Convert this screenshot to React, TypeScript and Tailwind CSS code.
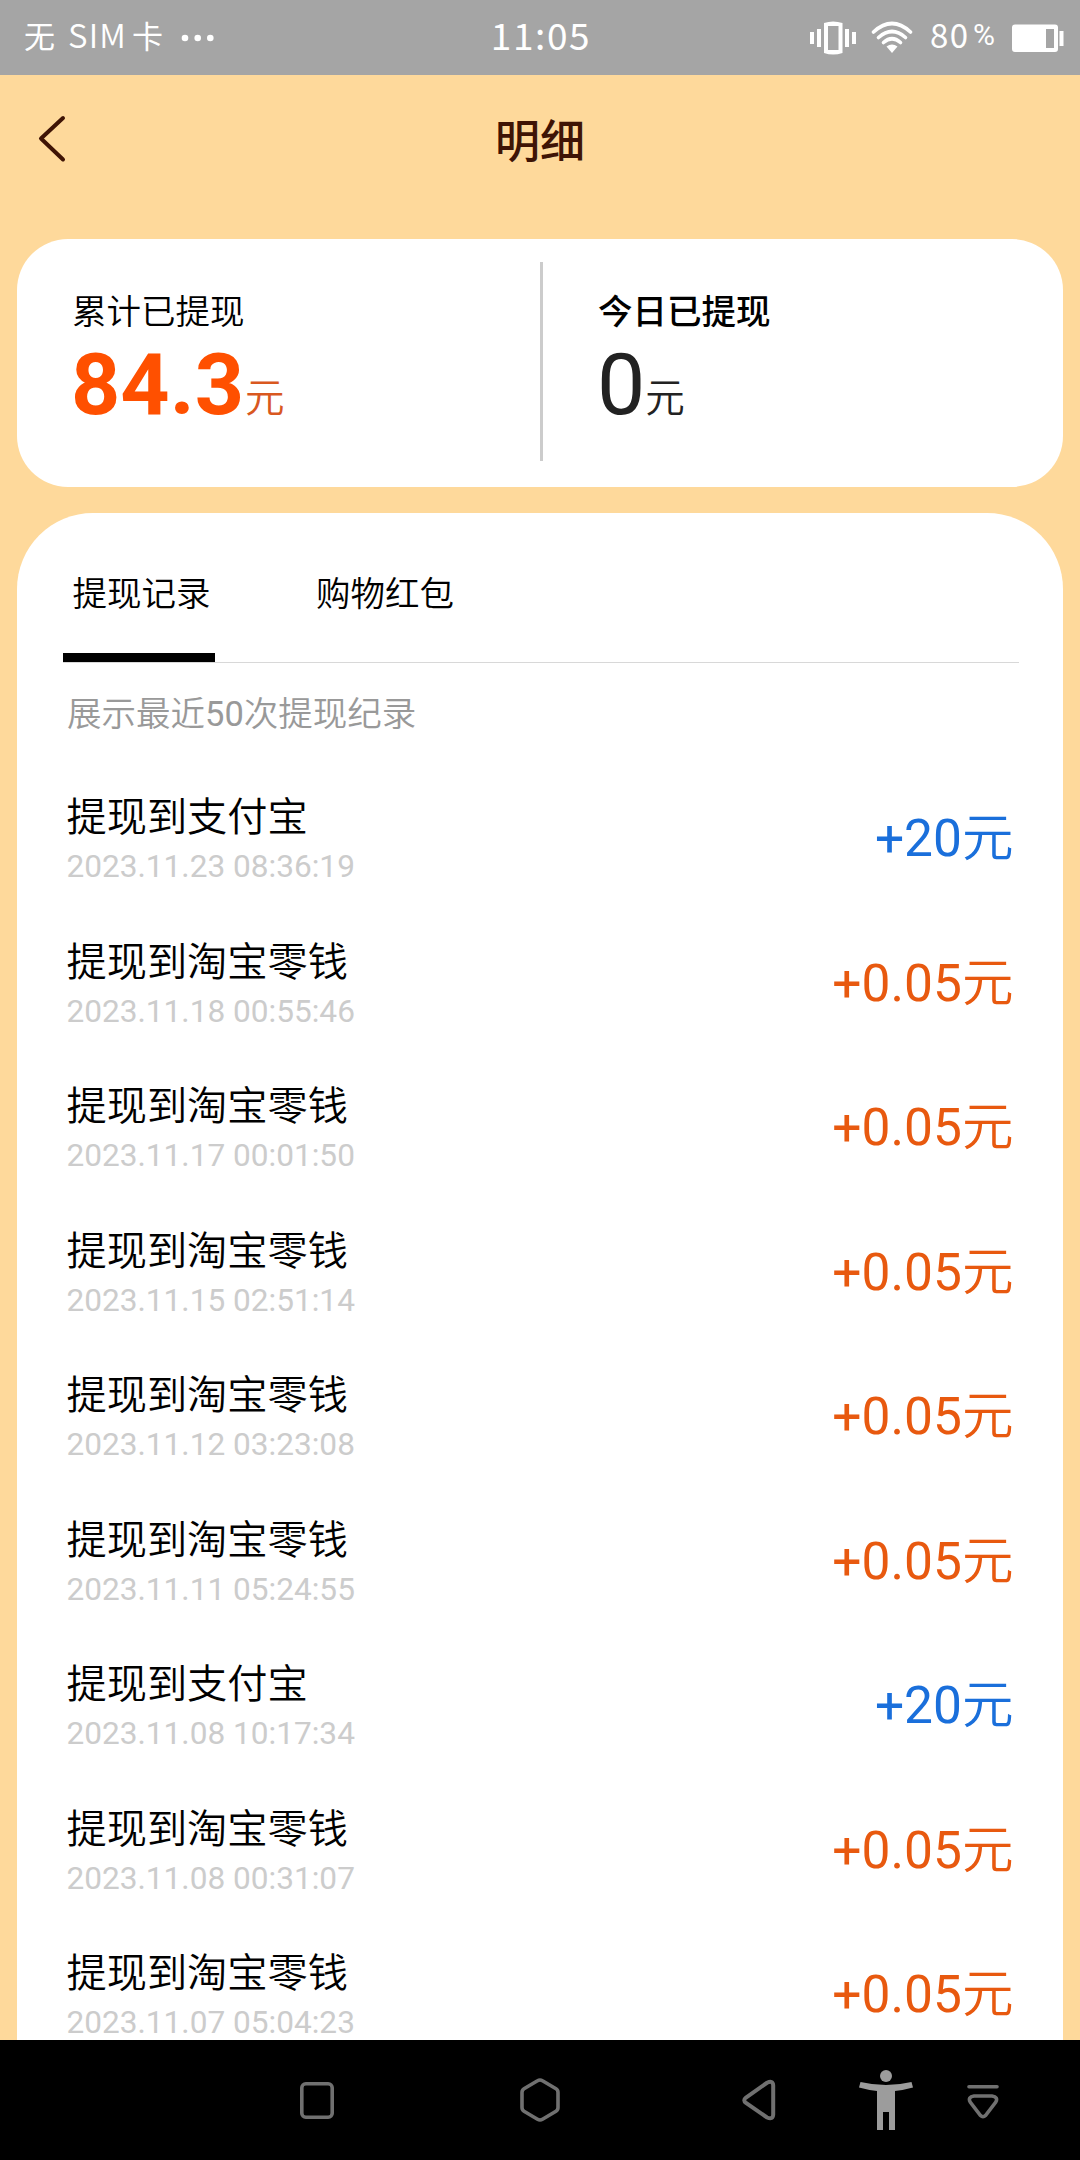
const records = [
  { id: 1, title: "提现到支付宝", time: "2023.11.23 08:36:19", amount: "+20", blue: true },
  { id: 2, title: "提现到淘宝零钱", time: "2023.11.18 00:55:46", amount: "+0.05", blue: false },
  { id: 3, title: "提现到淘宝零钱", time: "2023.11.17 00:01:50", amount: "+0.05", blue: false },
  { id: 4, title: "提现到淘宝零钱", time: "2023.11.15 02:51:14", amount: "+0.05", blue: false },
  { id: 5, title: "提现到淘宝零钱", time: "2023.11.12 03:23:08", amount: "+0.05", blue: false },
  { id: 6, title: "提现到淘宝零钱", time: "2023.11.11 05:24:55", amount: "+0.05", blue: false },
  { id: 7, title: "提现到支付宝", time: "2023.11.08 10:17:34", amount: "+20", blue: true },
  { id: 8, title: "提现到淘宝零钱", time: "2023.11.08 00:31:07", amount: "+0.05", blue: false },
  { id: 9, title: "提现到淘宝零钱", time: "2023.11.07 05:04:23", amount: "+0.05", blue: false },
];

function StatusBar() {
  return (
    <div className="grid h-[75px] shrink-0 grid-cols-3 items-center bg-[#a5a5a5] font-['Noto_Sans_CJK_SC',sans-serif] text-white">
      <div className="flex items-center pb-[6px] pl-6 text-[31px] leading-none">
        <span className="w-[44px]">无</span>
        <span className="w-[64px] text-[33px] font-[350] tracking-[1.2px]">SIM</span>
        <span>卡</span>
        <svg className="mt-[7px] ml-[18px]" width="34" height="8" viewBox="0 0 34 8" fill="white">
          <circle cx="4" cy="4" r="3.3" />
          <circle cx="16.7" cy="4" r="3.3" />
          <circle cx="29.3" cy="4" r="3.3" />
        </svg>
      </div>
      <div className="pb-[7px] pl-[2px] text-center text-[37px] leading-none tracking-[1.6px]">11:05</div>
      <div className="flex items-center justify-end pr-4">
        <svg width="47" height="34" viewBox="0 0 47 34" fill="white">
          <rect x="0" y="11" width="4" height="12" />
          <rect x="7" y="8" width="4" height="18" />
          <path fillRule="evenodd" d="M14 2 Q23 -1 32.500 2 V32 Q23 35 14 32 Z M18 5 V29 H28.500 V5 Z" />
          <rect x="35" y="8" width="4" height="18" />
          <rect x="42" y="11" width="4" height="12" />
        </svg>
        <svg className="ml-[14px]" width="42" height="34" viewBox="0 0 42 34" fill="none" stroke="white" strokeWidth="3.600" strokeLinecap="round">
          <path d="M2.500 11 Q21 -6 39.500 11" />
          <path d="M7.500 16.500 Q21 4.500 34.500 16.500" />
          <path d="M12.500 21.500 Q21 14 29.500 21.500" />
          <path d="M15.500 25.500 Q21 21.500 26.500 25.500 L21 32 Z" fill="white" stroke="none" />
        </svg>
        <span className="ml-[17px] w-[43px] pb-[7px] text-[33px] leading-none tracking-[1.500px]">80</span>
        <span className="w-[21px] pb-[5px] font-['Roboto',sans-serif] text-[30px] leading-none">%</span>
        <svg className="ml-[18px]" width="52" height="28" viewBox="0 0 52 28" fill="white">
          <path fillRule="evenodd" d="M3 0.500 H43 Q46 0.500 46 3.500 V25 Q46 28 43 28 H3 Q0 28 0 25 V3.500 Q0 0.500 3 0.500 Z M34 5 V24 H42 V5 Z" />
          <rect x="47.500" y="7" width="4" height="15" />
        </svg>
      </div>
    </div>
  );
}

function Header() {
  return (
    <div className="grid h-[164px] shrink-0 grid-cols-3">
      <svg className="mt-[38px] ml-[36px]" width="32" height="50" viewBox="0 0 32 50" fill="none" stroke="#3f1405" strokeWidth="4" strokeLinecap="round" strokeLinejoin="round">
        <path d="M27 5 L5 25.500 L27 46.500" />
      </svg>
      <h1 className="mt-[36px] text-center text-[45px] leading-[64px] font-medium text-[#3f1405]">明细</h1>
    </div>
  );
}

function NavBar() {
  return (
    <div className="flex h-[120px] shrink-0 bg-black pt-[30px]">
      <svg className="ml-[300px]" width="34" height="60" viewBox="0 0 34 60" fill="none" stroke="#707070" strokeWidth="3.600">
        <rect x="1.800" y="13.800" width="30.400" height="33.400" rx="4" />
      </svg>
      <svg className="ml-[186px]" width="40" height="60" viewBox="0 0 40 60" fill="none" stroke="#707070" strokeWidth="3.600" strokeLinejoin="round">
        <path d="M17.500 10.800 Q20 9.200 22.500 10.800 L36 18.800 Q38 20 38 22.500 V37.500 Q38 40 36 41.200 L22.500 49.200 Q20 50.800 17.500 49.200 L4 41.200 Q2 40 2 37.500 V22.500 Q2 20 4 18.800 Z" />
      </svg>
      <svg className="ml-[182px]" width="34" height="60" viewBox="0 0 34 60" fill="none" stroke="#707070" strokeWidth="4">
        <path d="M25 12.800 Q31 10 31.200 15.500 V44.500 Q31 50 25 47.500 L4 33 Q0.500 30.200 4 27.500 Z" />
      </svg>
      <svg className="ml-[82px]" width="56" height="62" viewBox="0 0 56 62" fill="#9c9c9c">
        <circle cx="28" cy="6" r="6" />
        <path d="M2.500 12 Q28 18 53.500 12 L55 17.500 Q46 20 37 21 V60 H31 V42 H25 V60 H19 V21 Q10 20 1 17.500 Z" />
      </svg>
      <svg className="ml-[53px]" width="32" height="60" viewBox="0 0 32 60" fill="none" stroke="#707070" strokeWidth="3.600" strokeLinecap="round">
        <path d="M2 16.800 H30" />
        <path d="M7 26 H25 Q31.500 27 28.800 32 L18.500 45.500 Q16 48 13.500 45.500 L3.200 32 Q0.500 27 7 26 Z" />
      </svg>
    </div>
  );
}

export default function App() {
  return (
    <div className="flex h-[2160px] w-[1080px] flex-col overflow-hidden bg-[#fed99b] font-['Roboto','Noto_Sans_CJK_SC',sans-serif]">
      <StatusBar />
      <Header />
      <section className="mx-[17px] flex h-[248px] shrink-0 rounded-[51px] bg-white">
        <div className="w-[523px] pt-[49px] pl-[55px]">
          <div className="text-[34.5px] leading-[48px] font-[350] text-black">累计已提现</div>
          <div className="-ml-px flex items-baseline leading-[98px]">
            <span className="text-[86px] font-bold text-[#ff5000]">84.3</span>
            <span className="relative -top-[2px] ml-px text-[39.5px] leading-[40px] font-[350] text-[#d9581f]">元</span>
          </div>
        </div>
        <div className="mt-[23px] h-[199px] w-[3px] bg-[#cccccc]" />
        <div className="flex-1 pt-[49px] pl-[55px]">
          <div className="text-[34.5px] leading-[48px] font-medium text-black">今日已提现</div>
          <div className="-ml-px flex items-baseline leading-[98px] text-[#222222]">
            <span className="text-[86px]">0</span>
            <span className="relative -top-[2px] text-[39.5px] leading-[40px] font-[350]">元</span>
          </div>
        </div>
      </section>
      <section className="mx-[17px] mt-[26px] flex min-h-0 flex-1 flex-col overflow-hidden rounded-t-[76px] bg-white px-[46px]">
        <div className="flex h-[150px] w-[956px] shrink-0 items-stretch border-b border-[#d8d8d8] text-[34.5px] leading-[50px] font-[350] text-black">
          <div className="w-[152px] border-b-[9px] border-black pt-[56px] pl-[9.5px]">提现记录</div>
          <div className="ml-[101px] pt-[56px]">购物红包</div>
        </div>
        <p className="mt-[26px] h-[50px] shrink-0 pl-[4px] text-[34.5px] leading-[50px] font-[350] text-[#999999]">
          展示最近<span className="font-normal">50</span>次提现纪录
        </p>
        <ul className="mt-[26px] pr-[3.5px] pl-[3.5px]">
          {records.map((r) => (
            <li key={r.id} className="flex h-[144.5px] justify-between">
              <div>
                <div className="pt-[23px] text-[40.2px] leading-[60px] font-[350] text-black">{r.title}</div>
                <div className="-mt-px text-[31.6px] leading-[40px] text-[#cccccc]">{r.time}</div>
              </div>
              <div className={r.blue ? "pt-[36px] text-[51.5px] leading-[76px] text-[#1a6fdb]" : "pt-[36px] text-[51.5px] leading-[76px] text-[#e8590f]"}>
                {r.amount}
                <span className="font-[350]">元</span>
              </div>
            </li>
          ))}
        </ul>
      </section>
      <NavBar />
    </div>
  );
}
